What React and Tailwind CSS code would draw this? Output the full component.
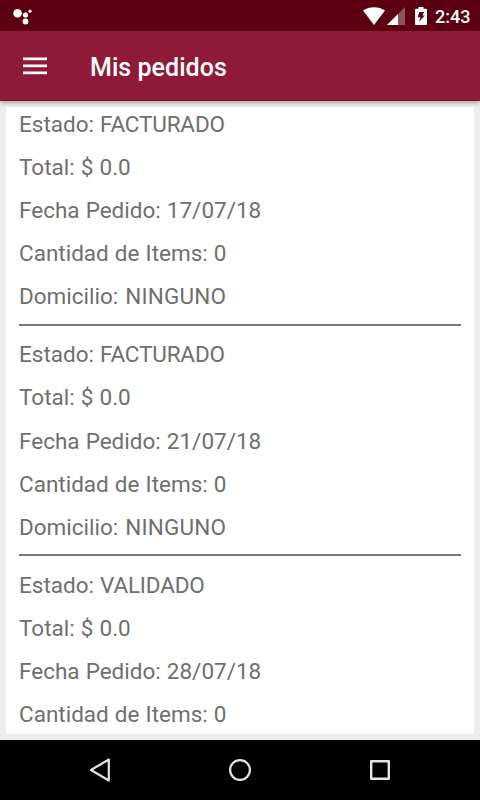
/**
 * Mis pedidos: order history list with app bar and system bars.
 */

const orders = [
  { estado: 'FACTURADO', total: '0.0', fecha: '17/07/18', items: 0, domicilio: 'NINGUNO' },
  { estado: 'FACTURADO', total: '0.0', fecha: '21/07/18', items: 0, domicilio: 'NINGUNO' },
  { estado: 'VALIDADO', total: '0.0', fecha: '28/07/18', items: 0 },
];

function StatusBar() {
  return (
    <div className="flex h-[31px] shrink-0 items-center bg-[#5c0011] text-white">
      <svg className="ml-3 h-6 w-6" viewBox="0 0 24 24" fill="currentColor">
        <circle cx="5.6" cy="9.2" r="4.3" />
        <circle cx="13.5" cy="11" r="2.6" />
        <circle cx="13.5" cy="17.5" r="2.9" />
        <circle cx="18" cy="7.2" r="1.6" />
      </svg>
      <div className="flex-1" />
      <svg className="h-[18px] w-[22px]" viewBox="0 0 22 18" fill="currentColor">
        <path d="M0 3.6C6-1 16-1 22 3.6L11 18Z" />
      </svg>
      <svg className="ml-[2px] h-[18px] w-[18px]" viewBox="0 0 18 18" fill="currentColor">
        <path d="M18 0V18H0Z" opacity="0.32" />
        <path d="M11 7V18H0Z" />
      </svg>
      <svg className="ml-[10px] h-[18px] w-3" viewBox="0 0 12 18">
        <path d="M3.5 0h5v1.8H11a1 1 0 0 1 1 1V17a1 1 0 0 1-1 1H1a1 1 0 0 1-1-1V2.8a1 1 0 0 1 1-1h2.5z" fill="white" />
        <path d="M4.3 5H9L7.500 8.500h2.300L4 14.800l1.400-4.600H2.600z" fill="#5c0011" />
      </svg>
      <span className="ml-[8px] w-[45px] pt-[2px] text-[18px] leading-none font-medium">2:43</span>
    </div>
  );
}

function AppBar() {
  return (
    <header className="relative z-10 flex h-[70px] shrink-0 items-center border-b border-[#8a0a24] bg-[#8e1a37] pl-[23px] text-white shadow-[0_2px_4px_rgba(0,0,0,0.3)]">
      <svg className="h-[18px] w-6" viewBox="0 0 24 18" fill="currentColor">
        <rect y="0.5" width="24" height="2.7" />
        <rect y="7.5" width="24" height="2.7" />
        <rect y="14.5" width="24" height="2.7" />
      </svg>
      <h1 className="ml-[43px] pt-[4px] text-[25px] leading-none font-medium tracking-[0.05px]">Mis pedidos</h1>
    </header>
  );
}

function Row({ label, children }) {
  return (
    <p className="h-[43.15px] leading-[43.15px] whitespace-nowrap">
      {label}: {children}
    </p>
  );
}

function Order({ order }) {
  return (
    <li className="not-last:mb-[7.8px] not-last:border-b-2 not-last:border-[#7b7779] not-last:pb-[5px]">
      <Row label="Estado">
        <span className="tracking-[-0.17px]">{order.estado}</span>
      </Row>
      <Row label="Total">$ {order.total}</Row>
      <Row label="Fecha Pedido">{order.fecha}</Row>
      <Row label="Cantidad de Items">{order.items}</Row>
      {order.domicilio && (
        <Row label="Domicilio">
          <span className="ml-px tracking-[0.15px]">{order.domicilio}</span>
        </Row>
      )}
    </li>
  );
}

function NavBar() {
  return (
    <nav className="flex h-[60px] shrink-0 items-center justify-center gap-[116px] bg-black text-[#e4e4e4]">
      <svg className="h-6 w-6" viewBox="0 0 24 24" fill="none" stroke="currentColor" strokeWidth="2.2" strokeLinejoin="round">
        <path d="M20.8 1.500V22.500L3 12Z" />
      </svg>
      <svg className="h-6 w-6" viewBox="0 0 24 24" fill="none" stroke="currentColor" strokeWidth="2.2">
        <circle cx="12" cy="12" r="9.900" />
      </svg>
      <svg className="h-6 w-6" viewBox="0 0 24 24" fill="none" stroke="currentColor" strokeWidth="2.4" strokeLinejoin="round">
        <rect x="3.2" y="3.2" width="17.6" height="17.6" />
      </svg>
    </nav>
  );
}

export default function App() {
  return (
    <div className="flex h-[800px] w-[480px] flex-col overflow-hidden bg-[#ededed] font-[Roboto,sans-serif]">
      <StatusBar />
      <AppBar />
      <main className="mx-[6px] my-[6px] min-h-0 flex-1 overflow-hidden bg-white px-[13px]">
        <ul className="-mt-[4.2px] text-[22.5px] text-[#6f6f6f] [word-spacing:0.5px]">
          {orders.map((order) => (
            <Order key={order.fecha} order={order} />
          ))}
        </ul>
      </main>
      <NavBar />
    </div>
  );
}
